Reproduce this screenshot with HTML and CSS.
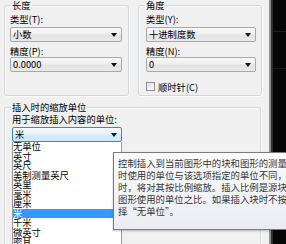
FILE: index.html
```html
<!DOCTYPE html>
<html lang="zh-CN">
<head>
<meta charset="utf-8">
<title>单位</title>
<link rel="stylesheet" href="styles.css">
</head>
<body>
<div class="screen">
  <div class="dialog">
    <div class="row">
      <div class="group g-len">
        <div class="legend">长度</div>
        <div class="label">类型(T):</div>
        <div class="combo"><span>小数</span><i class="arrow"></i></div>
        <div class="label l2">精度(P):</div>
        <div class="combo"><span>0.0000</span><i class="arrow"></i></div>
      </div>
      <div class="group g-ang">
        <div class="legend">角度</div>
        <div class="label">类型(Y):</div>
        <div class="combo"><span>十进制度数</span><i class="arrow"></i></div>
        <div class="label l2">精度(N):</div>
        <div class="combo"><span>0</span><i class="arrow"></i></div>
        <div class="check"><span class="box"></span><span>顺时针(C)</span></div>
      </div>
    </div>
    <div class="group g-ins">
      <div class="legend">插入时的缩放单位</div>
      <div class="label">用于缩放插入内容的单位:</div>
      <div class="combo-wrap">
        <div class="combo open"><span>米</span><i class="arrow"></i></div>
        <ul class="list">
          <li>无单位</li>
          <li>英寸</li>
          <li>英尺</li>
          <li>美制测量英尺</li>
          <li>英里</li>
          <li>毫米</li>
          <li>厘米</li>
          <li class="sel">米</li>
          <li>千米</li>
          <li>微英寸</li>
          <li>密耳</li>
        </ul>
      </div>
    </div>
    <div class="tooltip">
      <div class="tline">控制插入到当前图形中的块和图形的测量单位。如果块或图形创建</div>
      <div class="tline">时使用的单位与该选项指定的单位不同，则在插入这些块或图形</div>
      <div class="tline">时，将对其按比例缩放。插入比例是源块或图形使用的单位与目标</div>
      <div class="tline">图形使用的单位之比。如果插入块时不按指定单位缩放，请选</div>
      <div class="tline">择“无单位”。</div>
    </div>
  </div>
  <div class="canvas"></div>
</div>
</body>
</html>
```

FILE: styles.css
```css
html, body {
  margin: 0;
  padding: 0;
}
body {
  width: 286px;
  height: 244px;
  overflow: hidden;
  background: #f0f0f0;
  font-family: "Noto Sans CJK SC", "Noto Sans", sans-serif;
  font-size: 9.3px;
  color: #000;
}
.screen {
  display: flex;
  width: 286px;
  height: 244px;
  overflow: hidden;
}
.dialog {
  position: relative;
  flex: none;
  width: 269px;
  height: 244px;
  padding-left: 4px;
  box-sizing: border-box;
}
.row {
  display: flex;
  gap: 9px;
}
.group {
  box-sizing: border-box;
  margin-top: 5px;
  border: 1px solid #d3d7da;
  border-radius: 3px;
  box-shadow: inset 1px 1px 0 #fbfbfb, 1px 1px 0 #fbfbfb;
}
.g-len {
  width: 125px;
  height: 91px;
  --ind: 5px;
}
.g-ang {
  width: 124px;
  height: 91px;
  --ind: 7px;
}
.g-ins {
  width: 257px;
  height: 137px;
  margin-top: 11px;
  border-bottom-width: 0;
  border-radius: 3px 3px 0 0;
  --ind: 7px;
}
.legend {
  width: fit-content;
  height: 11px;
  line-height: 11px;
  margin: -6px 0 0 6px;
  padding: 0 1px;
  background: #f0f0f0;
  white-space: nowrap;
}
.label {
  height: 12px;
  line-height: 12px;
  margin: 2px 0 0 var(--ind);
  white-space: nowrap;
}
.l2 {
  margin-top: 3px;
}
.g-ins .label {
  margin-top: 0;
}
.combo {
  box-sizing: border-box;
  display: flex;
  align-items: center;
  justify-content: space-between;
  height: 15px;
  margin: 2px 0 0 var(--ind);
  padding: 0 4px 0 2px;
  border: 1px solid #a9a9a9;
  border-radius: 2px;
  background: linear-gradient(#f9f9f9, #efefef 45%, #e3e3e3 55%, #e9e9e9);
  line-height: 13px;
  white-space: nowrap;
}
.g-len .combo {
  width: 112px;
}
.g-ang .combo {
  width: 110px;
}
.l2 + .combo {
  margin-top: 0;
}
.arrow {
  width: 0;
  height: 0;
  border-left: 3.5px solid transparent;
  border-right: 3.5px solid transparent;
  border-top: 4px solid #111;
}
.check {
  display: flex;
  align-items: center;
  gap: 3px;
  height: 11px;
  margin: 9px 0 0 var(--ind);
  white-space: nowrap;
}
.box {
  width: 9px;
  height: 9px;
  box-sizing: border-box;
  border: 1px solid #8f8f8f;
  background: linear-gradient(135deg, #e2e2e2, #fbfbfb);
}
.combo-wrap {
  position: relative;
  width: 110px;
  margin: 2px 0 0 var(--ind);
}
.combo-wrap .combo {
  margin: 0;
  width: 110px;
}
.combo.open {
  border-color: #3f86c6;
  background: linear-gradient(#f3f9fd, #e6f3fc 45%, #d3ebfa 55%, #cfe8f8);
}
.list {
  position: absolute;
  top: 100%;
  left: 0;
  z-index: 5;
  box-sizing: border-box;
  width: 110px;
  height: 102px;
  margin: 0;
  padding: 0;
  overflow: hidden;
  list-style: none;
  background: #fff;
  border-left: 1px solid #9a9a9a;
  border-right: 1px solid #9a9a9a;
}
.list li {
  height: 9.5px;
  line-height: 9.5px;
  white-space: nowrap;
}
.list li.sel {
  background: #3399ff;
  color: #fff;
}
.tooltip {
  position: absolute;
  left: 113px;
  top: 152px;
  z-index: 10;
  box-sizing: border-box;
  width: 173px;
  height: 78px;
  padding: 4px 0 0 4px;
  border: 1px solid #7a7a7a;
  border-right-width: 0;
  background: linear-gradient(#fbfbfc, #ebecf2);
  box-shadow: 0 1px 2px rgba(0, 0, 0, 0.25);
  color: #353535;
  font-size: 9.4px;
  overflow: hidden;
}
.tline {
  height: 12px;
  line-height: 12px;
  white-space: nowrap;
}
.canvas {
  flex: 1;
  border-left: 2px solid #8e8e8e;
  box-shadow: inset 2px 0 0 #2e2e2e;
  background-color: #060606;
  background-image:
    linear-gradient(#1d1d1d, #1d1d1d),
    linear-gradient(#1d1d1d, #1d1d1d);
  background-size: 100% 1px, 100% 1px;
  background-position: 0 31px, 0 68px;
  background-repeat: no-repeat;
}
```
